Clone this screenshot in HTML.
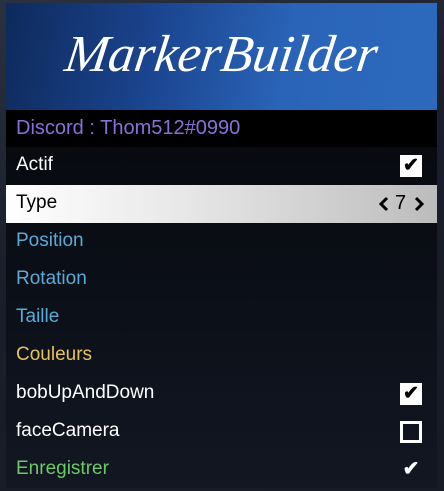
<!DOCTYPE html>
<html><head><style>
html,body{margin:0;padding:0;width:444px;height:491px;overflow:hidden;background:#1c2230;font-family:"Liberation Sans",Arial,sans-serif;}
.bg{position:absolute;inset:0;background:linear-gradient(160deg,#2a3140 0%,#1a1f2b 40%,#161b25 100%);}
.panel{position:absolute;left:6px;top:3px;width:431px;height:485px;}
.header{position:absolute;left:0;top:0;width:431px;height:107px;background:linear-gradient(100deg,#0e2a5c 0%,#1b4590 35%,#2a64b8 65%,#2c69bd 100%);}
.title{position:absolute;left:0;top:22px;width:431px;text-align:center;color:#fff;font-family:"Liberation Serif",serif;font-style:italic;font-size:52px;letter-spacing:0px;transform:skewX(-8deg);}
.sub{position:absolute;left:0;top:107px;width:431px;height:37px;background:#000;color:#8a6fd8;font-size:20px;line-height:37px;padding-left:10px;box-sizing:border-box;}
.list{position:absolute;left:0;top:144px;width:431px;height:341px;background:linear-gradient(180deg,#080a10 0%,#0c1019 50%,#121722 100%);}
.row{position:absolute;left:0;width:431px;height:38px;line-height:36px;font-size:19px;color:#fff;padding-left:10px;box-sizing:border-box;}
.sel{background:linear-gradient(90deg,#fff 0%,#e8e8e8 40%,#bcbcbc 100%);color:#000;}
.cb{position:absolute;left:394px;top:8px;width:22px;height:22px;box-sizing:border-box;}
.cb.on{background:#fff;color:#000;font-size:19px;line-height:22px;text-align:center;font-weight:bold;}
.cb.off{border:3px solid #fff;}
.blue{color:#5aaad8}.yel{color:#e6c45a}.grn{color:#6cc86a}
</style></head><body>
<div class="bg"></div>
<div class="panel">
 <div class="header"><div class="title">MarkerBuilder</div></div>
 <div class="sub">Discord : Thom512#0990</div>
 <div class="list">
  <div class="row" style="top:0">Actif<div class="cb on">✔</div></div>
  <div class="row sel" style="top:38px">Type
   <svg style="position:absolute;left:372px;top:11px" width="12" height="16" viewBox="0 0 12 16"><path d="M9 2 L3 8 L9 14" stroke="#000" stroke-width="3" fill="none"/></svg>
   <span style="position:absolute;left:389px;top:0;font-size:20px">7</span>
   <svg style="position:absolute;left:407px;top:11px" width="12" height="16" viewBox="0 0 12 16"><path d="M3 2 L9 8 L3 14" stroke="#000" stroke-width="3" fill="none"/></svg>
  </div>
  <div class="row blue" style="top:76px">Position</div>
  <div class="row blue" style="top:114px">Rotation</div>
  <div class="row blue" style="top:152px">Taille</div>
  <div class="row yel" style="top:190px">Couleurs</div>
  <div class="row" style="top:228px">bobUpAndDown<div class="cb on">✔</div></div>
  <div class="row" style="top:266px">faceCamera<div class="cb off"></div></div>
  <div class="row grn" style="top:304px">Enregistrer<span style="position:absolute;left:394px;width:22px;text-align:center;color:#fff;font-size:20px;font-weight:bold">✔</span></div>
 </div>
</div>
</body></html>
